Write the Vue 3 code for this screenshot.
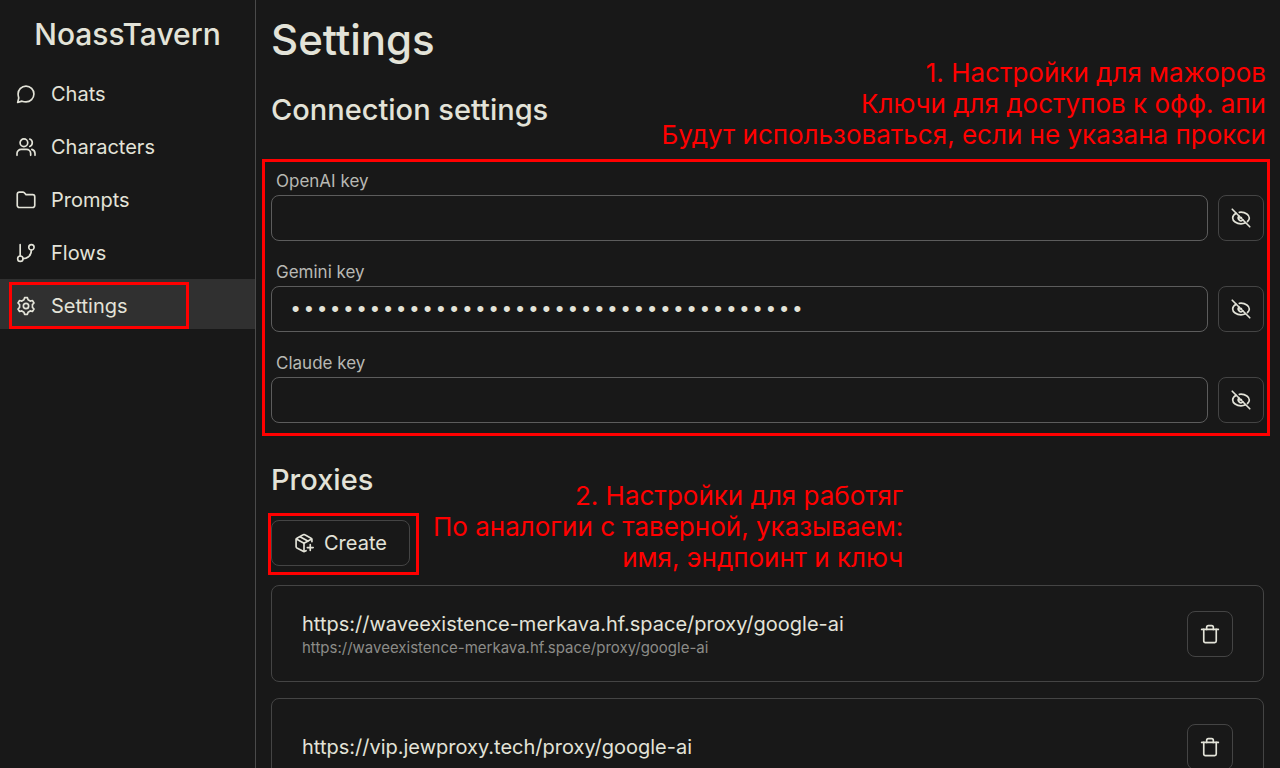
<script setup>
import { ref } from 'vue'

const nav = [
  { label: 'Chats', icon: 'chat' },
  { label: 'Characters', icon: 'users' },
  { label: 'Prompts', icon: 'folder' },
  { label: 'Flows', icon: 'branch' },
  { label: 'Settings', icon: 'gear', active: true },
]

const keys = ref([
  { id: 'openai', label: 'OpenAI key', value: '' },
  { id: 'gemini', label: 'Gemini key', value: 'x'.repeat(39) },
  { id: 'claude', label: 'Claude key', value: '' },
])

const proxies = [
  {
    name: 'https://waveexistence-merkava.hf.space/proxy/google-ai',
    url: 'https://waveexistence-merkava.hf.space/proxy/google-ai',
  },
  { name: 'https://vip.jewproxy.tech/proxy/google-ai', url: '' },
]

const icons = {
  chat: [
    'M12 21.5C17.200 21.500 21.500 17.200 21.500 12C21.500 6.800 17.200 2.500 12 2.500C6.800 2.500 2.500 6.800 2.500 12C2.500 13.700 3 15.500 3.300 16.800L2 22L7.200 20.600C8.500 21.100 10.200 21.500 12 21.500Z',
  ],
  users: [
    'M9.5 11.5a4.6 4.6 0 1 0 0-9.2a4.6 4.6 0 0 0 0 9.2Z',
    'M1.2 22v-2.2a5 5 0 0 1 5-5h6.400a5 5 0 0 1 5 5V22',
    'M16.500 2.500a4.700 4.700 0 0 1 0 8.800',
    'M19 14.800c2.400.6 3.800 2.500 3.800 5V22',
  ],
  folder: [
    'M1.500 18.500V5A2.500 2.500 0 0 1 4 2.500h4.200a2.500 2.500 0 0 1 1.800.8l2 2.200H20A2.500 2.500 0 0 1 22.500 8v10.500A2.500 2.500 0 0 1 20 21H4a2.500 2.500 0 0 1-2.500-2.500Z',
  ],
  branch: [
    'M5 2v13.500',
    'M5.200 22a3.200 3.200 0 1 0 0-6.400a3.200 3.200 0 0 0 0 6.400Z',
    'M18.500 8.400a3.200 3.200 0 1 0 0-6.400a3.200 3.200 0 0 0 0 6.400Z',
    'M18.500 8.500c0 5.500-2.500 9.500-10 10.300',
  ],
  gear: [
    'M12 15.200a3.200 3.200 0 1 0 0-6.400a3.200 3.200 0 0 0 0 6.400Z',
    'M9.500 4.600 10.300 2h3.400l.8 2.600 2.500 1.500 2.700-.7 1.900 3-1.900 2v3.200l1.900 2-1.900 3-2.700-.7-2.500 1.500-.8 2.600h-3.400l-.8-2.600L7 17.900l-2.700.7-1.900-3 1.900-2v-3.200l-1.900-2 1.900-3 2.700.7Z',
  ],
  eyeOff: [
    'M1.500 1.500l21 21',
    'M6.300 6.300C3.700 7.600 2 9.700 2 12c0 3.600 4.500 7 10 7 1.900 0 3.700-.4 5.300-1.200',
    'M10 5.200c.7-.1 1.300-.2 2-.2 5.500 0 10 3.400 10 7 0 1.500-.8 3-2.200 4.200',
    'M9.600 9.600a3.400 3.400 0 0 0 4.800 4.800',
    'M12.500 11.500 9.800 12',
  ],
  trash: [
    'M2 6.500h20',
    'M4.500 6.500V20.500a1.800 1.800 0 0 0 1.800 1.800h11.400a1.800 1.800 0 0 0 1.800-1.800V6.500',
    'M8 6.500V4a2 2 0 0 1 2-2h4a2 2 0 0 1 2 2v2.500',
  ],
  box: [
    'M21.500 10.500V8a2 2 0 0 0-1-1.700l-7.500-4.100a2 2 0 0 0-2 0L3.500 6.300a2 2 0 0 0-1 1.700v8.200a2 2 0 0 0 1 1.700l7.500 4.100a2 2 0 0 0 2 0l1.500-.8',
    'M2.800 7.200 12 12.200l9.200-5',
    'M12 12.200V22',
    'M7.200 4.500l9.300 5.200',
    'M16 17.500h7',
    'M19.500 14v7',
  ],
}
</script>

<template>
  <div class="app">
    <aside class="sidebar">
      <div class="brand">NoassTavern</div>
      <nav class="nav">
        <a
          v-for="item in nav"
          :key="item.label"
          href="#"
          class="nav-item"
          :class="{ active: item.active }"
        >
          <svg class="icon" viewBox="0 0 24 24" aria-hidden="true">
            <path v-for="d in icons[item.icon]" :key="d" :d="d" />
          </svg>
          <span>{{ item.label }}</span>
        </a>
      </nav>
    </aside>

    <main class="main">
      <h1>Settings</h1>

      <section class="connection">
        <h2>Connection settings</h2>
        <p class="note note-keys">
          1. Настройки для мажоров<br />
          Ключи для доступов к офф. апи<br />
          Будут использоваться, если не указана прокси
        </p>
        <div class="keys">
          <div v-for="key in keys" :key="key.id" class="field">
            <label :for="key.id">{{ key.label }}</label>
            <div class="field-row">
              <input :id="key.id" v-model="key.value" type="password" autocomplete="off" />
              <button type="button" class="square" :aria-label="'Show ' + key.label">
                <svg class="icon" viewBox="0 0 24 24" aria-hidden="true">
                  <path v-for="d in icons.eyeOff" :key="d" :d="d" />
                </svg>
              </button>
            </div>
          </div>
        </div>
      </section>

      <section class="proxies">
        <h2>Proxies</h2>
        <p class="note note-proxies">
          2. Настройки для работяг<br />
          По аналогии с таверной, указываем:<br />
          имя, эндпоинт и ключ
        </p>
        <div class="create-wrap">
          <button type="button" class="create">
            <svg class="icon" viewBox="0 0 24 24" aria-hidden="true">
              <path v-for="d in icons.box" :key="d" :d="d" />
            </svg>
            <span>Create</span>
          </button>
        </div>
        <ul class="cards">
          <li v-for="proxy in proxies" :key="proxy.name" class="card">
            <div class="card-text">
              <div class="card-name">{{ proxy.name }}</div>
              <div v-if="proxy.url" class="card-url">{{ proxy.url }}</div>
            </div>
            <button type="button" class="square" :aria-label="'Delete ' + proxy.name">
              <svg class="icon" viewBox="0 0 24 24" aria-hidden="true">
                <path v-for="d in icons.trash" :key="d" :d="d" />
              </svg>
            </button>
          </li>
        </ul>
      </section>
    </main>
  </div>
</template>

<style>
body {
  margin: 0;
  background: #181818;
}
</style>

<style scoped>
.app {
  display: flex;
  height: 100vh;
  overflow: hidden;
  background: #181818;
  color: #e3e3d8;
  font-family: Inter, "Noto Sans", sans-serif;
  font-size: 20px;
  line-height: 28px;
}

.app * {
  box-sizing: border-box;
}

.icon {
  flex: none;
  width: 20px;
  height: 20px;
  fill: none;
  stroke: currentColor;
  stroke-width: 2;
  stroke-linecap: round;
  stroke-linejoin: round;
}

.sidebar {
  flex: none;
  width: 256px;
  border-right: 1px solid #4a4a4a;
}

.brand {
  padding-top: 14px;
  text-align: center;
  font-size: 30px;
  font-weight: 500;
  line-height: 40px;
}

.nav {
  display: flex;
  flex-direction: column;
  gap: 3px;
  margin-top: 13px;
}

.nav-item {
  position: relative;
  display: flex;
  align-items: center;
  gap: 15px;
  height: 50px;
  padding: 3px 0 0 16px;
  color: inherit;
  text-decoration: none;
}

.nav-item.active {
  background: #303030;
}

.nav-item.active::after {
  content: "";
  position: absolute;
  inset: 3px 66px 0 9px;
  border: 3px solid #f00;
}

.main {
  flex: 1;
  min-width: 0;
  padding: 14px 16px 14px 15px;
}

h1,
h2,
p,
ul {
  margin: 0;
  padding: 0;
}

h1 {
  font-size: 42px;
  line-height: 52px;
  font-weight: 500;
}

h2 {
  font-size: 29px;
  line-height: 40px;
  font-weight: 500;
}

.connection,
.proxies {
  position: relative;
}

.connection {
  margin-top: 24px;
}

.proxies {
  margin-top: 37px;
}

.note {
  position: absolute;
  color: #f00;
  font-size: 26px;
  line-height: 31px;
  text-align: right;
  white-space: nowrap;
}

.note-keys {
  top: -33px;
  right: -2px;
}

.note-proxies {
  top: 20px;
  left: 162px;
}

.keys {
  position: relative;
  display: flex;
  flex-direction: column;
  gap: 17px;
  margin-top: 37px;
}

.keys::after {
  content: "";
  position: absolute;
  inset: -8px -6px -13px -9px;
  border: 3px solid #f00;
  pointer-events: none;
}

.field label {
  display: block;
  padding-left: 5px;
  color: #b8b8b4;
  font-size: 17px;
  line-height: 28px;
}

.field-row {
  display: flex;
  gap: 10px;
}

input {
  flex: 1;
  min-width: 0;
  height: 46px;
  padding: 2px 16px 0 17px;
  border: 1px solid #5c5c5c;
  border-radius: 8px;
  outline: none;
  background: transparent;
  color: inherit;
  font-family: "Liberation Mono", monospace;
  font-size: 22px;
}

button {
  display: flex;
  align-items: center;
  justify-content: center;
  border: 1px solid #444;
  border-radius: 8px;
  background: transparent;
  color: inherit;
  font: inherit;
}

.square {
  flex: none;
  width: 46px;
  height: 46px;
  padding: 0;
}

.create-wrap {
  position: relative;
  width: max-content;
  margin-top: 20px;
}

.create-wrap::after {
  content: "";
  position: absolute;
  inset: -7px -9px -9px -3px;
  border: 3px solid #f00;
  pointer-events: none;
}

.create {
  gap: 10px;
  height: 46px;
  padding: 0 22px;
}

.cards {
  display: flex;
  flex-direction: column;
  gap: 16px;
  margin-top: 19px;
  list-style: none;
}

.card {
  display: flex;
  align-items: center;
  justify-content: space-between;
  height: 97px;
  padding: 0 30px;
  border: 1px solid #444;
  border-radius: 8px;
}

.card-name {
  line-height: 28px;
}

.card-url {
  color: #8c8c88;
  font-size: 15px;
  line-height: 20px;
}
</style>
